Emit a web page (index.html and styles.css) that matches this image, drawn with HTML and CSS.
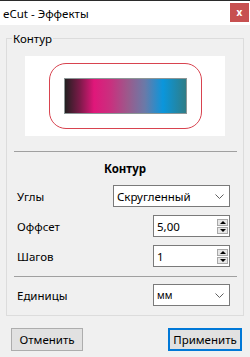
FILE: index.html
```html
<!DOCTYPE html>
<html lang="ru">
<head>
    <meta charset="UTF-8">
    <title>eCut - Эффекты</title>
    <link rel="stylesheet" href="styles.css">
</head>
<body>
    <div class="window">
        <div class="titlebar">
            <span class="title">eCut - Эффекты</span>
            <div class="close">x</div>
        </div>

        <fieldset class="group">
            <legend>Контур</legend>

            <div class="preview">
                <div class="outline">
                    <div class="swatch"></div>
                </div>
            </div>

            <div class="separator"></div>
            <div class="heading">Контур</div>

            <div class="row">
                <span class="label">Углы</span>
                <div class="combo wide">
                    <span>Скругленный</span>
                    <svg class="chevron" width="9" height="5" viewBox="0 0 9 5"><polyline points="0.5,0.5 4.5,4.5 8.5,0.5" fill="none" stroke="#606060" stroke-width="1"/></svg>
                </div>
            </div>

            <div class="row">
                <span class="label">Оффсет</span>
                <div class="spin">
                    <span>5,00</span>
                    <div class="spin-btns">
                        <div class="spin-btn"><i class="up"></i></div>
                        <div class="spin-btn"><i class="down"></i></div>
                    </div>
                </div>
            </div>

            <div class="row">
                <span class="label">Шагов</span>
                <div class="spin">
                    <span>1</span>
                    <div class="spin-btns">
                        <div class="spin-btn"><i class="up"></i></div>
                        <div class="spin-btn"><i class="down"></i></div>
                    </div>
                </div>
            </div>

            <div class="separator lower"></div>

            <div class="row units">
                <span class="label">Единицы</span>
                <div class="combo">
                    <span class="small">мм</span>
                    <svg class="chevron" width="9" height="5" viewBox="0 0 9 5"><polyline points="0.5,0.5 4.5,4.5 8.5,0.5" fill="none" stroke="#606060" stroke-width="1"/></svg>
                </div>
            </div>
        </fieldset>

        <div class="buttons">
            <button class="btn">Отменить</button>
            <button class="btn primary">Применить</button>
        </div>
    </div>
</body>
</html>
```

FILE: styles.css
```css
body {
    margin: 0;
    font-family: "Noto Sans", "Liberation Sans", sans-serif;
    font-size: 11.5px;
    color: #000;
    background: #f0f0f0;
}
.window {
    width: 250px;
    height: 357px;
    background: #f0f0f0;
    overflow: hidden;
}
.titlebar {
    height: 24px;
    border-top: 1px solid #2b2b2b;
    background: #fff;
    display: flex;
    align-items: center;
    justify-content: space-between;
    padding-left: 3px;
}
.title {
    font-size: 11.5px;
}
.close {
    width: 19px;
    height: 19px;
    margin-right: 1px;
    margin-top: -2px;
    background: #c75050;
    color: #fff;
    font-weight: bold;
    font-size: 10px;
    display: flex;
    align-items: center;
    justify-content: center;
}
.group {
    margin: 6px 6px 0 6px;
    padding: 10px 0 9px 0;
    border: 1px solid #dcdcdc;
    min-width: 0;
}
.group legend {
    padding: 0 1px;
    margin-left: 5px;
    line-height: 15px;
}
.preview {
    width: 200px;
    height: 80px;
    margin-left: 18px;
    background: #fff;
    display: flex;
    align-items: center;
    justify-content: center;
}
.outline {
    padding: 14px;
    border: 1px solid #d8434f;
    border-radius: 17px;
}
.swatch {
    width: 121px;
    height: 34px;
    border: 1px solid #8c9696;
    background: linear-gradient(to right, #231f20 0%, #7a1a48 12%, #e0177a 24%, #c8317f 38%, #9b5a8c 52%, #6a7aa8 66%, #0a96dc 81%, #2f7d86 100%);
}
.separator {
    height: 1px;
    background: #a0a0a0;
    margin: 15px 6px 0 7px;
}
.separator.lower {
    margin-top: 9px;
}
.heading {
    font-weight: bold;
    text-align: center;
    margin-top: 8px;
    line-height: 17px;
}
.row {
    display: flex;
    align-items: center;
    justify-content: space-between;
    padding: 0 13px 0 10px;
    margin-top: 8px;
}
.row.units {
    margin-top: 7px;
}
.combo, .spin {
    box-sizing: border-box;
    width: 77px;
    height: 22px;
    border: 1px solid #7a7a7a;
    background: #fff;
    display: flex;
    align-items: center;
    justify-content: space-between;
    padding-left: 3px;
}
.combo.wide {
    width: 117px;
}
.combo .small {
    font-size: 10px;
}
.chevron {
    margin-right: 5px;
}
.spin-btns {
    display: flex;
    flex-direction: column;
    gap: 1px;
    margin-right: 1px;
}
.spin-btn {
    width: 11px;
    height: 7px;
    box-sizing: border-box;
    background: #e6e6e6;
    border: 1px solid #a8a8a8;
    display: flex;
    align-items: center;
    justify-content: center;
}
.spin-btn i {
    width: 0;
    height: 0;
    border-left: 3px solid transparent;
    border-right: 3px solid transparent;
}
.spin-btn .up {
    border-bottom: 3px solid #000;
}
.spin-btn .down {
    border-top: 3px solid #000;
}
.buttons {
    display: flex;
    justify-content: space-between;
    padding: 12px 8px 0 11px;
}
.btn {
    box-sizing: border-box;
    width: 72px;
    height: 23px;
    font-family: inherit;
    font-size: 11.5px;
    background: #e1e1e1;
    border: 1px solid #adadad;
    padding: 0;
    color: #000;
}
.btn.primary {
    width: 74px;
    border: 2px solid #0078d7;
}
```
